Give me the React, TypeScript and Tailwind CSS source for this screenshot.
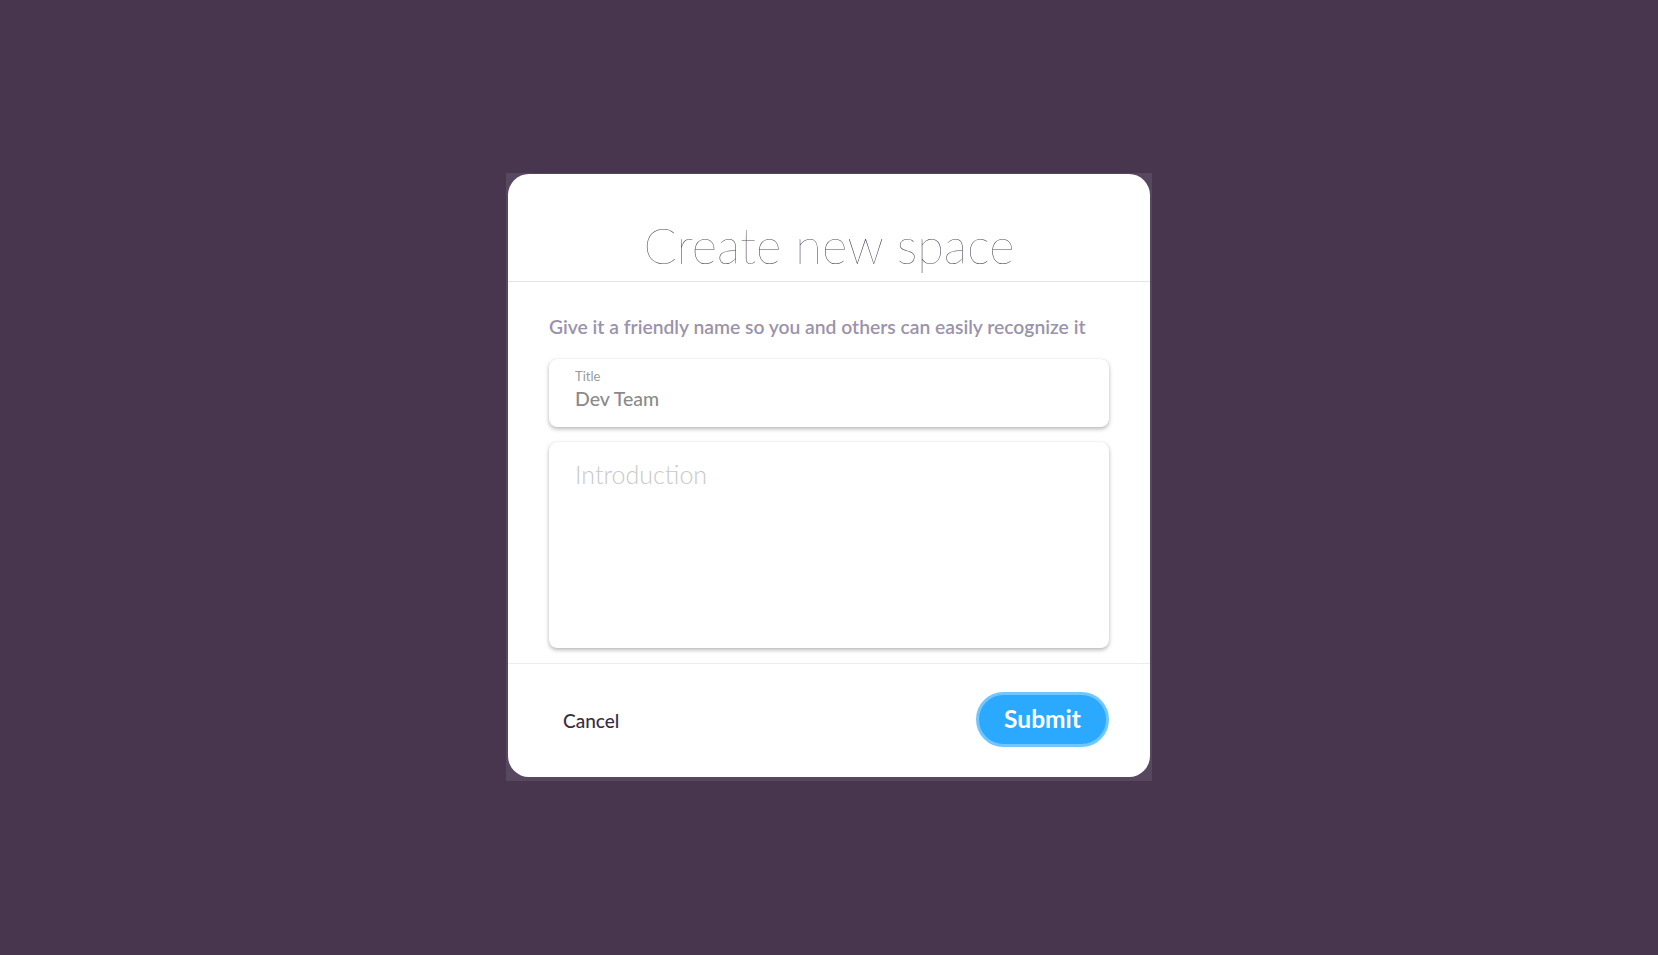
import React, { useState } from 'react';

export default function App() {
  const [title, setTitle] = useState('Dev Team');
  const [intro, setIntro] = useState('');

  return (
    <div className="min-h-screen w-full bg-[#48354e] flex items-start justify-center pt-[173px] font-['Lato',sans-serif]">
      {/* faint backdrop plate behind the card */}
      <div className="bg-[#57485f] pt-px px-[2px] pb-[4px]">
        <div className="w-[642px] bg-white rounded-[21px] flex flex-col">
          <div className="pt-[39px] pb-[4px] border-b border-[#e4e4e8] text-center">
            <h1 className="text-[49px] leading-[64px] font-[200] text-[#4f4458]">
              Create new space
            </h1>
          </div>

          <div className="px-[41px] pt-[33px] pb-[15px] flex flex-col">
            <p className="text-[19.3px] leading-[24px] font-semibold text-[#9a93ab] mb-[20px]">
              Give it a friendly name so you and others can easily recognize it
            </p>

            <label className="h-[68px] rounded-[8px] bg-white shadow-[0_2px_4px_rgba(0,0,0,0.28),0_0_1px_rgba(0,0,0,0.12)] px-[26px] pt-[9px] flex flex-col">
              <span className="text-[13px] leading-[16px] text-[#9a9a9a]">Title</span>
              <input
                value={title}
                onChange={(e) => setTitle(e.target.value)}
                className="mt-[2px] text-[19.5px] leading-[26px] font-medium text-[#8a8a8a] outline-none bg-transparent"
              />
            </label>

            <textarea
              value={intro}
              onChange={(e) => setIntro(e.target.value)}
              placeholder="Introduction"
              className="mt-[15px] h-[206px] resize-none rounded-[8px] bg-white shadow-[0_2px_4px_rgba(0,0,0,0.28),0_0_1px_rgba(0,0,0,0.12)] px-[26px] pt-[16px] text-[25px] leading-[32px] font-light text-[#888] placeholder:text-[#c9c9c9] outline-none"
            />
          </div>

          <div className="border-t border-[#ececef] px-[41px] pt-[28px] pb-[30px] flex items-center justify-between">
            <button className="ml-[14px] mt-[3px] text-[19px] font-medium text-[#3a2d42]">Cancel</button>
            <button className="h-[55px] w-[133px] rounded-full bg-[#2aa9ff] border-[3px] border-[#70c6ff] text-white text-[24.5px] font-bold">
              Submit
            </button>
          </div>
        </div>
      </div>
    </div>
  );
}
